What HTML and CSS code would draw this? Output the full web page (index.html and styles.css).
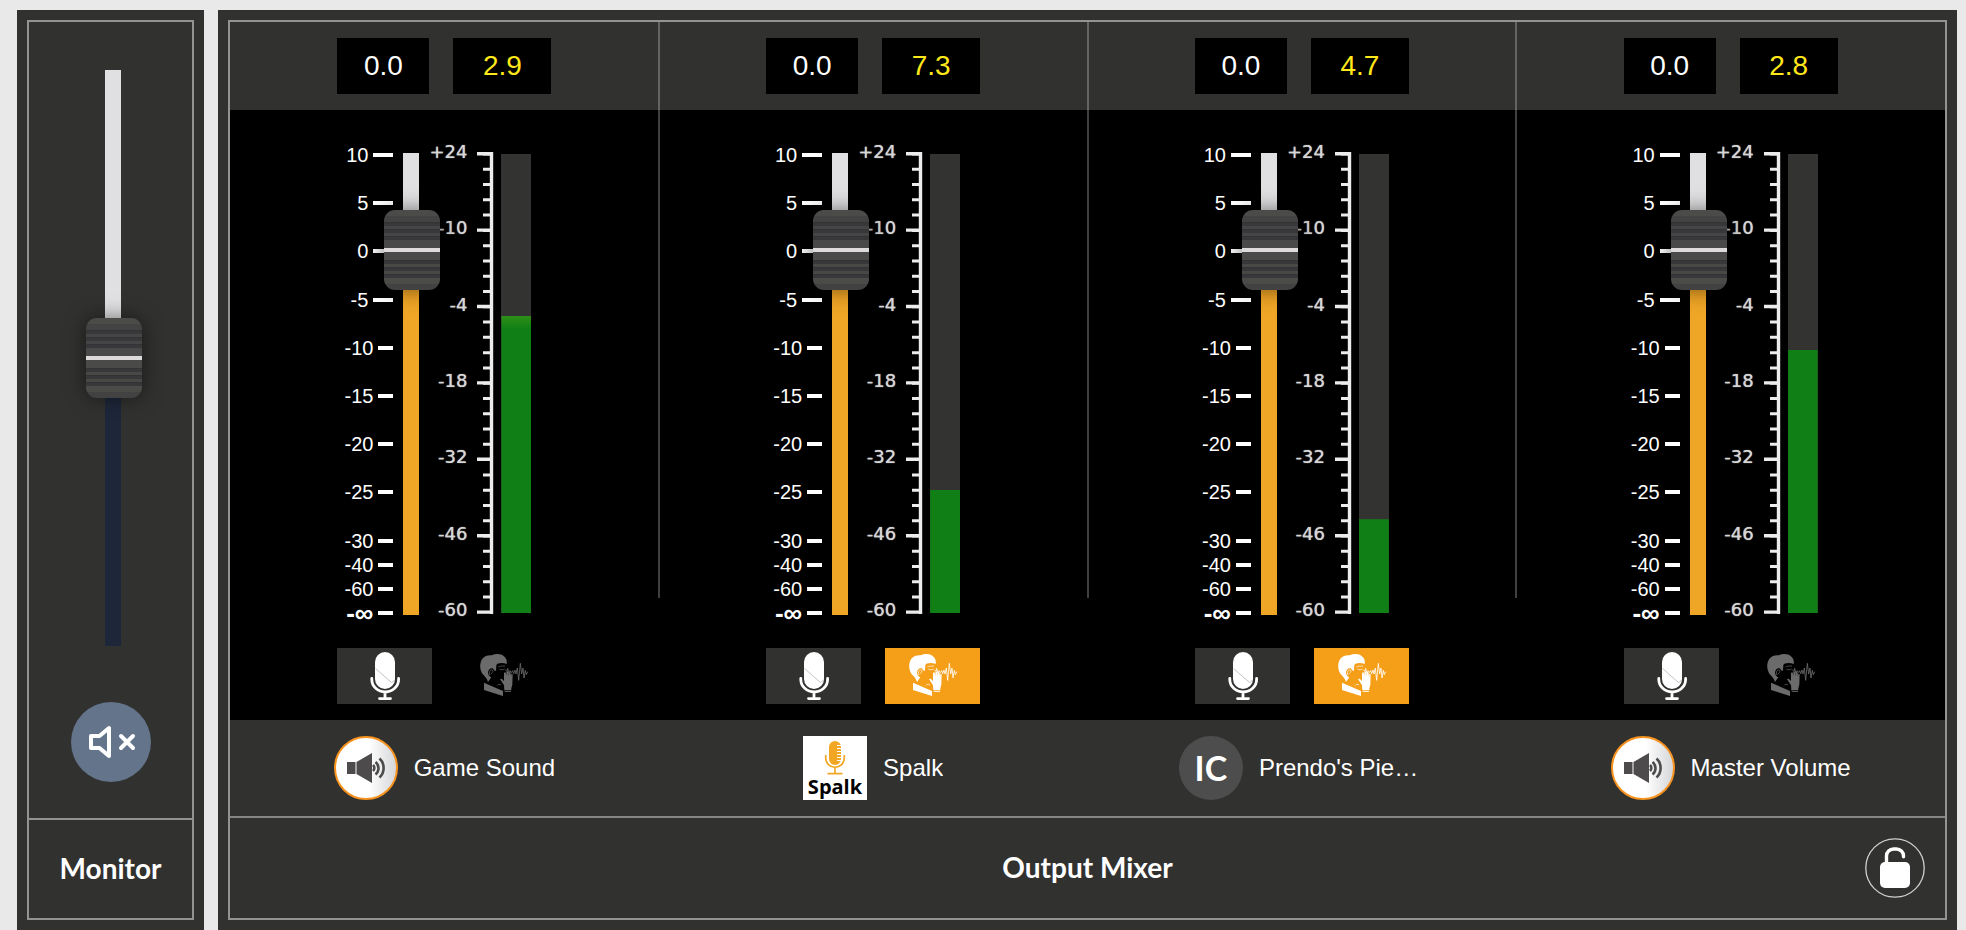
FILE: index.html
```html
<!DOCTYPE html>
<html lang="en">
<head>
<meta charset="utf-8">
<meta name="viewport" content="width=device-width, initial-scale=1">
<title>Output Mixer</title>
<link rel="stylesheet" href="styles.css">
</head>
<body>
<svg class="sprite" aria-hidden="true">
  <symbol id="ruler" viewBox="0 0 16 462">
    <path d="M9.5 -0.5V459" stroke-width="7" stroke-dasharray="3 12.28"/>
    <path d="M7 -1V461" stroke-width="14" stroke-dasharray="3.4 73"/>
    <path d="M14.5 -1V461" stroke-width="3.4"/>
  </symbol>
  <symbol id="mic" viewBox="0 0 95 56">
    <rect x="38" y="4" width="20" height="37" rx="10" fill="#fff"/>
    <path d="M38.5 20.5 54.5 34.5M54.5 35l3-3" fill="none" stroke="#c4c4c4"/>
    <path d="M34.8 30.5v1a13.4 12.5 0 0 0 26.8 0v-1M48 44.5V50M42.5 50.6h11" fill="none" stroke="#fff" stroke-width="2.8" stroke-linecap="round"/>
  </symbol>
  <symbol id="whisper" viewBox="0 0 285 168">
    <path fill="currentColor" d="M96 102C94 92 87 86 79 77 70 62 71 44 79 32 86 24 96 21 107 22 122 15 140 18 147 28 153 35 153 42 152 48 142 44 132 45 124 47L121 51 120 68C116 68 113 66 112 62 104 58 97 64 96 74 97 82 101 86 106 88Z"/>
    <path fill="none" stroke="currentColor" stroke-width="2" d="M101 81C98 71 104 62 110 67 113 70 108 75 104 79"/>
    <path fill="none" stroke="currentColor" stroke-width="2" d="M127 57C132 53 140 55 147 54M130 63C135 66 141 66 146 63M123 113c3-5 8-5 12-2"/>
    <path fill="currentColor" d="M84 104 141 129V144L84 126Z"/>
    <path fill="currentColor" d="M145 127 144 112 132 93 137 92 144 99 144 74 149 73 150.500 84 151.500 71 157 70 158 84 159.500 72 164 74 165 86 166 77 170 79 169 110 166 121 166 127Z"/>
    <path fill="currentColor" d="M146 129.500H165V132H146Z"/>
    <path fill="none" stroke="currentColor" stroke-width="2.500" stroke-linejoin="round" d="M148 66 153 70 155 61 159 77 162 68 166 74 170 68 173 77 177 66 180 78 184 60 188 97 193 46 197 78 201 60 204 90 208 67 211 80 215 71"/>
  </symbol>
  <symbol id="speaker" viewBox="0 0 60 60">
    <path fill="#4d4b4c" d="M11 24h8.500v12H11zM20.500 24 36 15V45L20.500 36Z"/>
    <path fill="none" stroke="#4d4b4c" stroke-width="2.600" d="M37 27a4 4 0 0 1 0 6M39.500 24a8 8 0 0 1 0 12.500M43.500 20.500a13 13 0 0 1 0 19"/>
  </symbol>
</svg>

<main class="desk">
  <section class="panel monitor">
    <div class="frame">
      <div class="monitor-body">
        <div class="slot slot-monitor"><input class="fader fader-monitor" type="range" min="0" max="1000" value="500" aria-label="Monitor volume"></div>
        <button class="mute" type="button" aria-label="Unmute monitor">
          <svg viewBox="0 0 80 80"><path d="M20 34h8.500L38 26v28l-9.500-8H20zM50 34l12 12M62 34 50 46"/></svg>
        </button>
      </div>
      <h2 class="title monitor-title">Monitor</h2>
    </div>
  </section>

  <section class="panel mixer">
    <div class="frame">
      <div class="channels">

        <article class="channel">
          <div class="readouts"><div class="group"><output class="gain">0.0</output><output class="peak">2.9</output></div></div>
          <div class="strip">
            <div class="group levels">
              <ul class="scale"><li>10<i></i></li><li>5<i></i></li><li>0<i></i></li><li>-5<i></i></li><li>-10<i></i></li><li>-15<i></i></li><li>-20<i></i></li><li>-25<i></i></li><li class="half">-30<i></i></li><li class="half">-40<i></i></li><li class="half">-60<i></i></li><li class="end"><b>-∞</b><i></i></li></ul>
              <div class="slot"><input class="fader" type="range" min="0" max="1000" value="851" aria-label="Game Sound level"></div>
              <ul class="meter-scale"><li>+24</li><li>-10</li><li>-4</li><li>-18</li><li>-32</li><li>-46</li><li>-60</li></ul>
              <svg class="ruler" aria-hidden="true"><use href="#ruler"/></svg>
              <div class="meter"><div class="level" style="clip-path: inset(35.3% 0 0 0)"></div></div>
            </div>
            <div class="group buttons">
              <button class="toggle mic" type="button" aria-label="Microphone"><svg><use href="#mic"/></svg></button>
              <button class="toggle talk" type="button" aria-label="Talkback"><svg><use href="#whisper"/></svg></button>
            </div>
          </div>
          <div class="name"><span class="avatar speaker"><svg><use href="#speaker"/></svg></span><span class="label">Game Sound</span></div>
        </article>

        <article class="channel">
          <div class="readouts"><div class="group"><output class="gain">0.0</output><output class="peak">7.3</output></div></div>
          <div class="strip">
            <div class="group levels">
              <ul class="scale"><li>10<i></i></li><li>5<i></i></li><li>0<i></i></li><li>-5<i></i></li><li>-10<i></i></li><li>-15<i></i></li><li>-20<i></i></li><li>-25<i></i></li><li class="half">-30<i></i></li><li class="half">-40<i></i></li><li class="half">-60<i></i></li><li class="end"><b>-∞</b><i></i></li></ul>
              <div class="slot"><input class="fader" type="range" min="0" max="1000" value="851" aria-label="Spalk level"></div>
              <ul class="meter-scale"><li>+24</li><li>-10</li><li>-4</li><li>-18</li><li>-32</li><li>-46</li><li>-60</li></ul>
              <svg class="ruler" aria-hidden="true"><use href="#ruler"/></svg>
              <div class="meter"><div class="level" style="clip-path: inset(73.2% 0 0 0)"></div></div>
            </div>
            <div class="group buttons">
              <button class="toggle mic" type="button" aria-label="Microphone"><svg><use href="#mic"/></svg></button>
              <button class="toggle talk active" type="button" aria-label="Talkback" aria-pressed="true"><svg><use href="#whisper"/></svg></button>
            </div>
          </div>
          <div class="name">
            <svg class="avatar" viewBox="0 0 64 64" role="img" aria-label="Spalk logo">
              <rect width="64" height="64" fill="#fff"/>
              <rect x="26" y="5" width="12" height="24" rx="6" fill="#f2a724"/>
              <path d="M34 9.500h5M34 12.500h5M34 15.500h5M34 18.500h5M34 21.500h5M34 24.500h5" stroke="#fff" stroke-width="1.200"/>
              <path d="M22.700 19v3a9.300 9.300 0 0 0 18.600 0v-3M32 31.500v6M24.500 37.700h15" fill="none" stroke="#f2a724" stroke-width="1.700"/>
              <text class="logo-text" x="32" y="58" text-anchor="middle">Spalk</text>
            </svg>
            <span class="label">Spalk</span>
          </div>
        </article>

        <article class="channel">
          <div class="readouts"><div class="group"><output class="gain">0.0</output><output class="peak">4.7</output></div></div>
          <div class="strip">
            <div class="group levels">
              <ul class="scale"><li>10<i></i></li><li>5<i></i></li><li>0<i></i></li><li>-5<i></i></li><li>-10<i></i></li><li>-15<i></i></li><li>-20<i></i></li><li>-25<i></i></li><li class="half">-30<i></i></li><li class="half">-40<i></i></li><li class="half">-60<i></i></li><li class="end"><b>-∞</b><i></i></li></ul>
              <div class="slot"><input class="fader" type="range" min="0" max="1000" value="851" aria-label="Prendo's level"></div>
              <ul class="meter-scale"><li>+24</li><li>-10</li><li>-4</li><li>-18</li><li>-32</li><li>-46</li><li>-60</li></ul>
              <svg class="ruler" aria-hidden="true"><use href="#ruler"/></svg>
              <div class="meter"><div class="level" style="clip-path: inset(79.6% 0 0 0)"></div></div>
            </div>
            <div class="group buttons">
              <button class="toggle mic" type="button" aria-label="Microphone"><svg><use href="#mic"/></svg></button>
              <button class="toggle talk active" type="button" aria-label="Talkback" aria-pressed="true"><svg><use href="#whisper"/></svg></button>
            </div>
          </div>
          <div class="name"><span class="avatar initials">IC</span><span class="label label-full">Prendo's Pie…</span></div>
        </article>

        <article class="channel">
          <div class="readouts"><div class="group"><output class="gain">0.0</output><output class="peak">2.8</output></div></div>
          <div class="strip">
            <div class="group levels">
              <ul class="scale"><li>10<i></i></li><li>5<i></i></li><li>0<i></i></li><li>-5<i></i></li><li>-10<i></i></li><li>-15<i></i></li><li>-20<i></i></li><li>-25<i></i></li><li class="half">-30<i></i></li><li class="half">-40<i></i></li><li class="half">-60<i></i></li><li class="end"><b>-∞</b><i></i></li></ul>
              <div class="slot"><input class="fader" type="range" min="0" max="1000" value="851" aria-label="Master Volume level"></div>
              <ul class="meter-scale"><li>+24</li><li>-10</li><li>-4</li><li>-18</li><li>-32</li><li>-46</li><li>-60</li></ul>
              <svg class="ruler" aria-hidden="true"><use href="#ruler"/></svg>
              <div class="meter"><div class="level" style="clip-path: inset(42.7% 0 0 0)"></div></div>
            </div>
            <div class="group buttons">
              <button class="toggle mic" type="button" aria-label="Microphone"><svg><use href="#mic"/></svg></button>
              <button class="toggle talk" type="button" aria-label="Talkback"><svg><use href="#whisper"/></svg></button>
            </div>
          </div>
          <div class="name"><span class="avatar speaker"><svg><use href="#speaker"/></svg></span><span class="label">Master Volume</span></div>
        </article>

      </div>
      <footer class="mixer-footer">
        <h2 class="title">Output Mixer</h2>
        <button class="lock" type="button" aria-label="Lock mixer">
          <svg viewBox="0 0 60 60"><circle cx="30" cy="30" r="29.200"/><path d="M21.500 26V18a7 7 0 0 1 7-7h3a7 7 0 0 1 7 7v.800"/><rect x="15" y="24" width="30" height="26" rx="5"/></svg>
        </button>
      </footer>
    </div>
  </section>
</main>
</body>
</html>
```

FILE: styles.css
```css
* { box-sizing: border-box; }

body {
  margin: 0;
  background: #e9e9e9;
  color: #fff;
  font-family: "Liberation Sans", Arial, sans-serif;
}

ul { margin: 0; padding: 0; list-style: none; }

button { border: 0; padding: 0; background: none; color: inherit; cursor: pointer; }

svg { display: block; }

.sprite { position: absolute; width: 0; height: 0; }
.sprite symbol { overflow: visible; }

.desk {
  display: flex;
  gap: 14px;
  min-height: 100vh;
  padding: 10px 9px 0 17px;
}

.panel {
  display: flex;
  padding: 10px;
  background: #313130;
}

.frame {
  display: flex;
  flex: 1;
  flex-direction: column;
  min-width: 0;
  border: 2px solid #939392;
}

.title {
  margin: 0;
  padding-bottom: 2px;
  font: 700 28px/34px Lato, "Noto Sans", sans-serif;
  text-align: center;
}

/* Monitor */

.monitor { flex: 0 0 187px; }
.mixer { flex: 1; min-width: 0; }

.monitor-body {
  display: flex;
  flex: 1;
  flex-direction: column;
  align-items: center;
  gap: 56px;
  padding: 48px 0 36px;
}

.monitor-title {
  padding: 31px 0 33px;
  border-top: 2px solid #939392;
}

.mute {
  width: 80px;
  height: 80px;
  border-radius: 50%;
  background: #64748b;
}

.mute path {
  fill: none;
  stroke: #fff;
  stroke-width: 4;
  stroke-linecap: round;
  stroke-linejoin: round;
}

/* Faders */

.slot {
  width: 16px;
  height: 462px;
  margin: 0 10px;
}

.slot-monitor { height: 576px; margin: 0 0 0 4px; }

.fader {
  --travel: 79%;
  --fill: #efa526;
  position: relative;
  z-index: 1;
  display: block;
  width: 56px;
  height: 100%;
  margin: 0 0 0 -19px;
  appearance: none;
  writing-mode: vertical-lr;
  direction: rtl;
  background: linear-gradient(to top, var(--fill) var(--travel), #e0e0e2 var(--travel)) 19px 0 / 16px 100% no-repeat;
}

.fader-monitor { --travel: 50%; --fill: #1e273a; }

.fader::-webkit-slider-thumb {
  appearance: none;
  width: 56px;
  height: 80px;
  border-radius: 11px;
  background:
    linear-gradient(#dcdada, #dcdada) 0 38px / 100% 4px no-repeat,
    repeating-linear-gradient(#333335 0 1px, #38383b 1px 4px, #454545 4px 7px) 0 12px / 100% 18px no-repeat,
    repeating-linear-gradient(#333335 0 1px, #38383b 1px 4px, #484846 4px 7px) 0 50px / 100% 18px no-repeat,
    linear-gradient(#4b4b49 0 6px, #434343 6px 12px, #494949 30px, #4c4c4a 68px, #4a4a48 74px, #424242 74px);
  box-shadow: 0 0 20px rgba(0, 0, 0, 0.5);
}

/* Channels */

.channels {
  display: grid;
  flex: 1;
  grid-template-columns: repeat(4, 1fr);
}

.channel {
  position: relative;
  display: flex;
  flex-direction: column;
}

.channel + .channel::before {
  content: "";
  position: absolute;
  top: 0;
  bottom: 218px;
  left: -1px;
  width: 2px;
  background: rgba(255, 255, 255, 0.25);
}

.group {
  display: flex;
  width: 214px;
  margin: 0 auto;
}

.readouts { padding: 16px 0; }
.readouts .group { gap: 24px; }

.gain,
.peak {
  width: 92px;
  background: #000;
  font-size: 28px;
  line-height: 56px;
  text-align: center;
}

.peak { width: 98px; color: #ffe81a; }

.strip {
  flex: 1;
  padding: 43px 0 16px;
  background: #000;
}

.scale {
  display: flex;
  flex-direction: column;
  width: 56px;
  margin: -10px 0;
  font-size: 20px;
  line-height: 24px;
}

.scale li {
  display: flex;
  flex: 2 0 0;
  justify-content: flex-end;
  gap: 5px;
  min-height: 0;
}

.scale .half { flex-grow: 1; }
.scale .end { flex: 0 0 24px; }
.scale b { font-size: 26px; }

.scale i {
  width: 15px;
  height: 4px;
  margin-top: 10px;
  background: #fff;
}

.scale li:nth-child(-n + 4) i { width: 20px; }

.meter-scale {
  display: flex;
  flex-direction: column;
  justify-content: space-between;
  width: 38px;
  margin: -11px 0 -5px;
  color: #d6d6d6;
  font: 18px/20px "DejaVu Sans", sans-serif;
  text-align: right;
  text-shadow: 0 0 1px #d6d6d6;
}

.ruler {
  width: 16px;
  height: 462px;
  margin: 0 8px 0 10px;
  overflow: visible;
  fill: none;
  stroke: #ececec;
}

.meter {
  width: 30px;
  margin: 1px 0 2px;
  background: #333331;
}

.level {
  height: 100%;
  background: linear-gradient(to top, #108016 62%, #339018 65%, #c8c81e 80%);
}

.buttons {
  gap: 24px;
  margin-top: 33px;
}

.toggle {
  width: 95px;
  height: 56px;
}

.toggle svg { width: 100%; height: 100%; }

.mic { background: #313130; }
.talk { color: #6b6b6b; }
.talk.active { background: #f59f19; color: #fff; }

.name {
  display: flex;
  align-items: center;
  justify-content: center;
  gap: 16px;
  padding: 16px 0;
}

.avatar {
  width: 64px;
  height: 64px;
  flex: none;
}

.speaker {
  border: 2px solid #f7931e;
  border-radius: 50%;
  background: linear-gradient(to right, #fff 55%, #d5d6d8);
}

.speaker svg { width: 60px; height: 60px; }

.initials {
  border-radius: 50%;
  background: #4d4d4d;
  font: 700 34px/64px Lato, sans-serif;
  text-align: center;
}

.logo-text {
  font: 700 20px "Open Sans", sans-serif;
  fill: #000;
}

.label {
  max-width: 166px;
  overflow: hidden;
  font-size: 24px;
  line-height: 32px;
  white-space: nowrap;
  text-overflow: ellipsis;
}

.label-full { width: 166px; }

.mixer-footer {
  display: grid;
  grid-template-columns: 80px 1fr 80px;
  align-items: center;
  padding: 20px 0;
  border-top: 2px solid #858585;
}

.mixer-footer .title { grid-column: 2; }

.lock { width: 60px; height: 60px; }
.lock circle { fill: none; stroke: #d0d0d0; stroke-width: 1.3; }
.lock path { fill: none; stroke: #fff; stroke-width: 3.4; stroke-linecap: round; }
.lock rect { fill: #fff; }
```
